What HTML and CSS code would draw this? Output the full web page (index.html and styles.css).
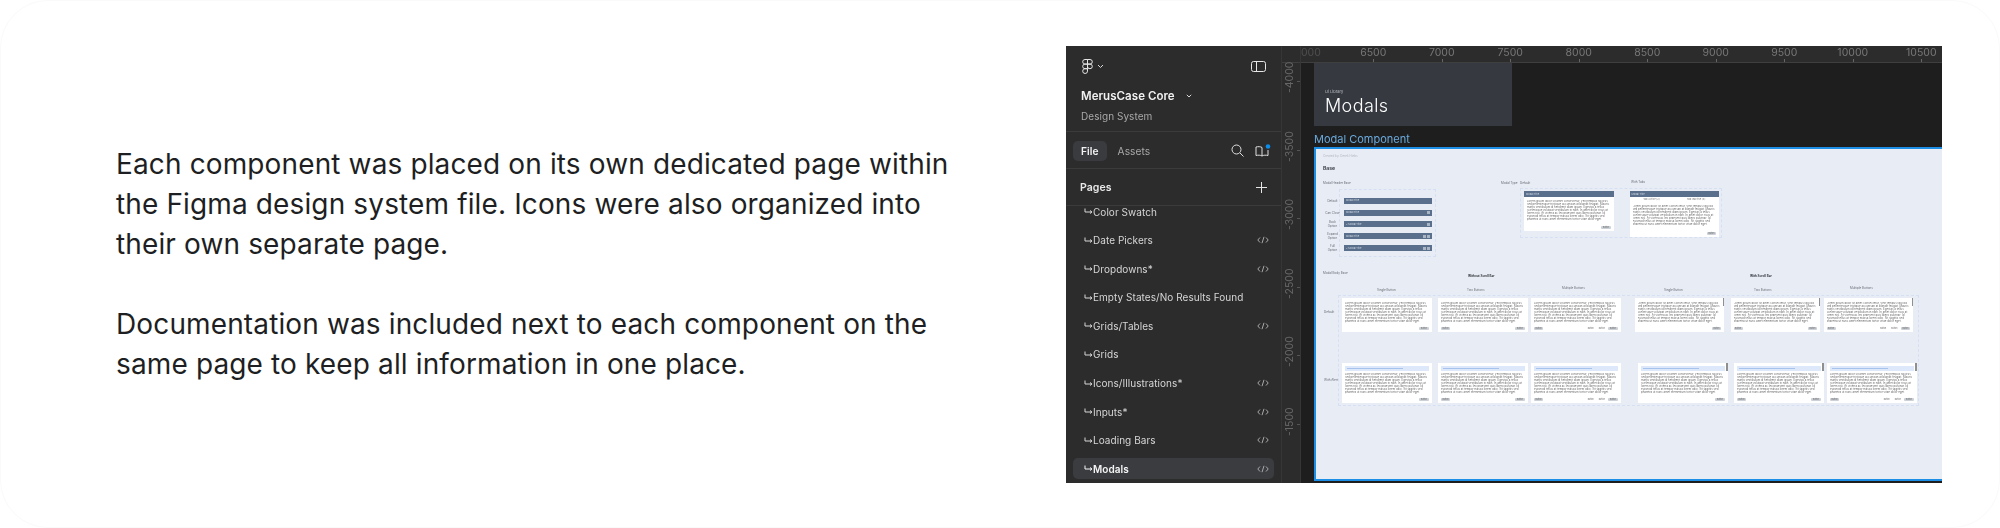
FILE: index.html
```html
<!DOCTYPE html>
<html lang="en">
<head>
    <meta charset="UTF-8">
    <meta name="viewport" content="width=device-width, initial-scale=1.0">
    <title>Design system</title>
    <link rel="stylesheet" href="styles.css">
</head>
<body>
    <svg class="defs" width="0" height="0">
      <symbol id="nest" viewBox="0 0 9 7"><path d="M1 0.5V4H7.5M6 2.5L8 4L6 5.5" fill="none" stroke="currentColor"/></symbol>
      <symbol id="code" viewBox="0 0 12 8"><path d="M3 1.5L0.8 4L3 6.5M9 1.5L11.2 4L9 6.5M7 0.8L5 7.2" fill="none" stroke="currentColor"/></symbol>
    </svg>

    <div class="slide">
      <div class="copy">
        <p>Each component was placed on its own dedicated page within the Figma design system file. Icons were also organized into their own separate page.</p>
        <p>Documentation was included next to each component on the same page to keep all information in one place.</p>
      </div>

      <div class="shot">
        <aside class="sidebar">
          <div class="side-head">
            <div class="side-top">
              <div class="logo-menu">
                <svg width="11" height="15" viewBox="0 0 11 15" fill="none" stroke="#e6e6e6"><path d="M5.5 0.5H3a2.3 2.3 0 0 0 0 4.6h2.5zM5.5 0.5H8a2.3 2.3 0 0 1 0 4.6H5.5zM5.5 5.1H3a2.3 2.3 0 0 0 0 4.6h2.5zM5.5 5.1H8a2.3 2.3 0 1 1 0 4.6a2.3 2.3 0 0 1 -2.5 -2.3zM5.5 9.7H3a2.4 2.4 0 1 0 2.5 2.4z"/></svg>
                <svg width="7" height="5" viewBox="0 0 7 5" fill="none" stroke="#d8d8d8"><path d="M1 1L3.5 3.5L6 1"/></svg>
              </div>
              <svg width="15" height="11" viewBox="0 0 15 11" fill="none" stroke="#e6e6e6"><rect x="0.5" y="0.5" width="14" height="10" rx="2"/><path d="M5.5 0.5V10.5"/></svg>
            </div>
            <div class="file-name">
              <span>MerusCase Core</span>
              <svg width="6" height="4" viewBox="0 0 6 4" fill="none" stroke="#d8d8d8"><path d="M0.8 0.8L3 3L5.2 0.8"/></svg>
            </div>
            <div class="file-team">Design System</div>
          </div>

          <div class="side-tabs">
            <span class="tab tab-active">File</span>
            <span class="tab">Assets</span>
            <div class="tab-icons">
              <svg width="13" height="13" viewBox="0 0 13 13" fill="none" stroke="#e0e0e0"><circle cx="5.5" cy="5.5" r="4.5"/><path d="M9 9L12.5 12.5"/></svg>
              <svg width="16" height="13" viewBox="0 0 16 13" fill="none" stroke="#e0e0e0"><path d="M7 3.5C5.5 2.5 3 2.5 1 3V11.5C3 11 5.5 11 7 12C8.5 11 11 11 13 11.5V6M7 3.5V12"/><circle cx="13" cy="2.5" r="2.3" fill="#0d8ce9" stroke="none"/></svg>
            </div>
          </div>

          <div class="pages-head">
            <span>Pages</span>
            <svg width="11" height="11" viewBox="0 0 11 11" stroke="#e6e6e6"><path d="M5.5 0V11M0 5.5H11"/></svg>
          </div>

          <ul class="pages">
            <li><svg class="nest"><use href="#nest"/></svg>Color Swatch</li>
            <li><svg class="nest"><use href="#nest"/></svg>Date Pickers<svg class="code"><use href="#code"/></svg></li>
            <li><svg class="nest"><use href="#nest"/></svg>Dropdowns*<svg class="code"><use href="#code"/></svg></li>
            <li><svg class="nest"><use href="#nest"/></svg>Empty States/No Results Found</li>
            <li><svg class="nest"><use href="#nest"/></svg>Grids/Tables<svg class="code"><use href="#code"/></svg></li>
            <li><svg class="nest"><use href="#nest"/></svg>Grids</li>
            <li><svg class="nest"><use href="#nest"/></svg>Icons/Illustrations*<svg class="code"><use href="#code"/></svg></li>
            <li><svg class="nest"><use href="#nest"/></svg>Inputs*<svg class="code"><use href="#code"/></svg></li>
            <li><svg class="nest"><use href="#nest"/></svg>Loading Bars<svg class="code"><use href="#code"/></svg></li>
            <li class="page-active"><svg class="nest"><use href="#nest"/></svg>Modals<svg class="code"><use href="#code"/></svg></li>
          </ul>
        </aside>

        <div class="ruler-side">
          <div class="ruler-corner"></div>
          <span>-4000</span><span>-3500</span><span>-3000</span><span>-2500</span><span>-2000</span><span>-1500</span>
        </div>

        <div class="stage">
          <div class="ruler-top">
            <span class="ruler-clip">000</span><span>6500</span><span>7000</span><span>7500</span><span>8000</span><span>8500</span><span>9000</span><span>9500</span><span>10000</span><span>10500</span>
          </div>

          <div class="canvas">
            <div class="banner">
              <small>Ui Library</small>
              <strong>Modals</strong>
            </div>
            <div class="frame-name">Modal Component</div>

            <div class="frame">
              <div class="credit">Created by: Derek Hiebs</div>
              <div class="frame-title">Base</div>
              <div class="tiny header-base">Modal Header Base</div>
              <div class="tiny type-label">Modal Type</div>
              <div class="tiny default-label">Default</div>
              <div class="tiny title-label">With Tabs</div>
              <div class="tiny body-base">Modal Body Base</div>
              <div class="tiny scroll-off">Without Scroll Bar</div>
              <div class="tiny scroll-on">With Scroll Bar</div>

              <div class="header-box">
                <div class="head-row"><span class="tiny">Default</span><div class="bar"><i>Modal Title</i></div></div>
                <div class="head-row"><span class="tiny">Can Close</span><div class="bar"><i>Modal Title</i><b></b></div></div>
                <div class="head-row"><span class="tiny">Back Option</span><div class="bar"><i>&lt; Modal Title</i><b></b></div></div>
                <div class="head-row"><span class="tiny">Expand Option</span><div class="bar"><i>Modal Title</i><b></b><b></b></div></div>
                <div class="head-row"><span class="tiny">Full Option</span><div class="bar"><i>&lt; Modal Title</i><b></b><b></b></div></div>
              </div>

              <div class="type-box">
                <div class="modal type-modal">
                  <div class="bar"><i>Modal Title</i></div>
                  <p>Lorem ipsum dolor sit amet consectetur. Velit tempus facilisis sed pellentesque tristique accumsan at blandit feugiat. Mauris mattis vestibulum id hendrerit diam ipsum. Egestas a tellus scelerisque volutpat vestibulum in nibh. In amet dolor risus at lorem nisi. At viverra ac leo praesent quis libero pulvinar. Id euismod tellus at tempor massa lorem odio. Sit sagittis sed pharetra ut nunc amet elementum tortor vitae dolor eget.</p>
                  <div class="btns"><u></u><em>Button</em></div>
                </div>
                <div class="modal type-modal tabbed">
                  <div class="bar"><i>Modal Title</i></div>
                  <div class="tabs-row"><span>Tab Active (2)</span><span>Tab Inactive (4)</span></div>
                  <p>Lorem ipsum dolor sit amet consectetur. Velit tempus facilisis sed pellentesque tristique accumsan at blandit feugiat. Mauris mattis vestibulum id hendrerit diam ipsum. Egestas a tellus scelerisque volutpat vestibulum in nibh. In amet dolor risus at lorem nisi. At viverra ac leo praesent quis libero pulvinar. Id euismod tellus at tempor massa lorem odio. Sit sagittis sed pharetra ut nunc amet elementum tortor vitae dolor eget.</p>
                  <div class="btns"><u></u><em>Button</em></div>
                </div>
              </div>

              <div class="tiny col-a">Single Button</div>
              <div class="tiny col-b">Two Buttons</div>
              <div class="tiny col-c">Multiple Buttons</div>
              <div class="tiny col-d">Single Button</div>
              <div class="tiny col-e">Two Buttons</div>
              <div class="tiny col-f">Multiple Buttons</div>
              <div class="tiny row-default">Default</div>
              <div class="tiny row-alert">With Alert</div>

              <div class="body-box">
                <div class="modal-row">
                  <div class="modal">
                    <p>Lorem ipsum dolor sit amet consectetur. Velit tempus facilisis sed pellentesque tristique accumsan at blandit feugiat. Mauris mattis vestibulum id hendrerit diam ipsum. Egestas a tellus scelerisque volutpat vestibulum in nibh. In amet dolor risus at lorem nisi. At viverra ac leo praesent quis libero pulvinar. Id euismod tellus at tempor massa lorem odio. Sit sagittis sed pharetra ut nunc amet elementum tortor vitae dolor eget.</p>
                    <div class="btns"><u></u><em>Button</em></div>
                  </div>
                  <div class="modal">
                    <p>Lorem ipsum dolor sit amet consectetur. Velit tempus facilisis sed pellentesque tristique accumsan at blandit feugiat. Mauris mattis vestibulum id hendrerit diam ipsum. Egestas a tellus scelerisque volutpat vestibulum in nibh. In amet dolor risus at lorem nisi. At viverra ac leo praesent quis libero pulvinar. Id euismod tellus at tempor massa lorem odio. Sit sagittis sed pharetra ut nunc amet elementum tortor vitae dolor eget.</p>
                    <div class="btns"><em>Button</em><u></u><em>Button</em></div>
                  </div>
                  <div class="modal tight">
                    <p>Lorem ipsum dolor sit amet consectetur. Velit tempus facilisis sed pellentesque tristique accumsan at blandit feugiat. Mauris mattis vestibulum id hendrerit diam ipsum. Egestas a tellus scelerisque volutpat vestibulum in nibh. In amet dolor risus at lorem nisi. At viverra ac leo praesent quis libero pulvinar. Id euismod tellus at tempor massa lorem odio. Sit sagittis sed pharetra ut nunc amet elementum tortor vitae dolor eget.</p>
                    <div class="btns"><em>Button</em><u></u><em class="plain">Button</em><em class="plain">Button</em><em>Button</em></div>
                  </div>
                  <div class="modal scroll group-a">
                    <p>Lorem ipsum dolor sit amet consectetur. Velit tempus facilisis sed pellentesque tristique accumsan at blandit feugiat. Mauris mattis vestibulum id hendrerit diam ipsum. Egestas a tellus scelerisque volutpat vestibulum in nibh. In amet dolor risus at lorem nisi. At viverra ac leo praesent quis libero pulvinar. Id euismod tellus at tempor massa lorem odio. Sit sagittis sed pharetra ut nunc amet elementum tortor vitae dolor eget.</p>
                    <div class="btns"><u></u><em>Button</em></div>
                  </div>
                  <div class="modal scroll">
                    <p>Lorem ipsum dolor sit amet consectetur. Velit tempus facilisis sed pellentesque tristique accumsan at blandit feugiat. Mauris mattis vestibulum id hendrerit diam ipsum. Egestas a tellus scelerisque volutpat vestibulum in nibh. In amet dolor risus at lorem nisi. At viverra ac leo praesent quis libero pulvinar. Id euismod tellus at tempor massa lorem odio. Sit sagittis sed pharetra ut nunc amet elementum tortor vitae dolor eget.</p>
                    <div class="btns"><em>Button</em><u></u><em>Button</em></div>
                  </div>
                  <div class="modal scroll tight">
                    <p>Lorem ipsum dolor sit amet consectetur. Velit tempus facilisis sed pellentesque tristique accumsan at blandit feugiat. Mauris mattis vestibulum id hendrerit diam ipsum. Egestas a tellus scelerisque volutpat vestibulum in nibh. In amet dolor risus at lorem nisi. At viverra ac leo praesent quis libero pulvinar. Id euismod tellus at tempor massa lorem odio. Sit sagittis sed pharetra ut nunc amet elementum tortor vitae dolor eget.</p>
                    <div class="btns"><em>Button</em><u></u><em class="plain">Button</em><em class="plain">Button</em><em>Button</em></div>
                  </div>
                </div>

                <div class="modal-row alerts">
                  <div class="modal">
                    <div class="alert"><s></s></div>
                    <p>Lorem ipsum dolor sit amet consectetur. Velit tempus facilisis sed pellentesque tristique accumsan at blandit feugiat. Mauris mattis vestibulum id hendrerit diam ipsum. Egestas a tellus scelerisque volutpat vestibulum in nibh. In amet dolor risus at lorem nisi. At viverra ac leo praesent quis libero pulvinar. Id euismod tellus at tempor massa lorem odio. Sit sagittis sed pharetra ut nunc amet elementum tortor vitae dolor eget.</p>
                    <div class="btns"><u></u><em>Button</em></div>
                  </div>
                  <div class="modal">
                    <div class="alert"><s></s></div>
                    <p>Lorem ipsum dolor sit amet consectetur. Velit tempus facilisis sed pellentesque tristique accumsan at blandit feugiat. Mauris mattis vestibulum id hendrerit diam ipsum. Egestas a tellus scelerisque volutpat vestibulum in nibh. In amet dolor risus at lorem nisi. At viverra ac leo praesent quis libero pulvinar. Id euismod tellus at tempor massa lorem odio. Sit sagittis sed pharetra ut nunc amet elementum tortor vitae dolor eget.</p>
                    <div class="btns"><em>Button</em><u></u><em>Button</em></div>
                  </div>
                  <div class="modal tight">
                    <div class="alert"><s></s></div>
                    <p>Lorem ipsum dolor sit amet consectetur. Velit tempus facilisis sed pellentesque tristique accumsan at blandit feugiat. Mauris mattis vestibulum id hendrerit diam ipsum. Egestas a tellus scelerisque volutpat vestibulum in nibh. In amet dolor risus at lorem nisi. At viverra ac leo praesent quis libero pulvinar. Id euismod tellus at tempor massa lorem odio. Sit sagittis sed pharetra ut nunc amet elementum tortor vitae dolor eget.</p>
                    <div class="btns"><em>Button</em><u></u><em class="plain">Button</em><em class="plain">Button</em><em>Button</em></div>
                  </div>
                  <div class="modal scroll group-b">
                    <div class="alert"><s></s></div>
                    <p>Lorem ipsum dolor sit amet consectetur. Velit tempus facilisis sed pellentesque tristique accumsan at blandit feugiat. Mauris mattis vestibulum id hendrerit diam ipsum. Egestas a tellus scelerisque volutpat vestibulum in nibh. In amet dolor risus at lorem nisi. At viverra ac leo praesent quis libero pulvinar. Id euismod tellus at tempor massa lorem odio. Sit sagittis sed pharetra ut nunc amet elementum tortor vitae dolor eget.</p>
                    <div class="btns"><u></u><em>Button</em></div>
                  </div>
                  <div class="modal scroll">
                    <div class="alert"><s></s></div>
                    <p>Lorem ipsum dolor sit amet consectetur. Velit tempus facilisis sed pellentesque tristique accumsan at blandit feugiat. Mauris mattis vestibulum id hendrerit diam ipsum. Egestas a tellus scelerisque volutpat vestibulum in nibh. In amet dolor risus at lorem nisi. At viverra ac leo praesent quis libero pulvinar. Id euismod tellus at tempor massa lorem odio. Sit sagittis sed pharetra ut nunc amet elementum tortor vitae dolor eget.</p>
                    <div class="btns"><em>Button</em><u></u><em>Button</em></div>
                  </div>
                  <div class="modal scroll tight">
                    <div class="alert"><s></s></div>
                    <p>Lorem ipsum dolor sit amet consectetur. Velit tempus facilisis sed pellentesque tristique accumsan at blandit feugiat. Mauris mattis vestibulum id hendrerit diam ipsum. Egestas a tellus scelerisque volutpat vestibulum in nibh. In amet dolor risus at lorem nisi. At viverra ac leo praesent quis libero pulvinar. Id euismod tellus at tempor massa lorem odio. Sit sagittis sed pharetra ut nunc amet elementum tortor vitae dolor eget.</p>
                    <div class="btns"><em>Button</em><u></u><em class="plain">Button</em><em class="plain">Button</em><em>Button</em></div>
                  </div>
                </div>
              </div>
            </div>
          </div>
        </div>
      </div>
    </div>
</body>
</html>
```

FILE: styles.css
```css
* {
  box-sizing: border-box;
}

html,
body {
  height: 100%;
}

body {
  margin: 0;
  background-color: #fff;
  font-family: Inter, "Liberation Sans", sans-serif;
  overflow: hidden;
}

.defs {
  display: block;
  height: 0;
}

.slide {
  display: flex;
  align-items: center;
  justify-content: space-between;
  height: 528px;
  padding: 0 57px 0 115px;
  border: 1px solid #fafafa;
  border-radius: 48px;
}

/* left copy */
.copy {
  width: 850px;
  color: #1e1f23;
  font-size: 28px;
  letter-spacing: 0.13px;
  line-height: 40px;
}

.copy p {
  margin: 0 0 40px;
}

.copy p:last-child {
  margin-bottom: 0;
}

/* figma screenshot */
.shot {
  display: flex;
  width: 876px;
  height: 437px;
  margin-top: 1px;
  background-color: #2c2c2c;
  overflow: hidden;
  filter: blur(0.35px);
}

.sidebar {
  display: flex;
  flex-direction: column;
  flex: none;
  width: 215px;
  color: #e8e8e8;
  font-size: 10px;
  letter-spacing: 0.05px;
}

.side-head {
  height: 86px;
  padding: 13px 15px 0 15px;
  border-bottom: 1px solid #3b3b3b;
}

.side-top {
  display: flex;
  align-items: center;
  justify-content: space-between;
  height: 15px;
  padding-left: 1px;
}

.logo-menu {
  display: flex;
  align-items: center;
  gap: 4px;
}

.file-name {
  display: flex;
  align-items: center;
  gap: 11px;
  margin-top: 14px;
  color: #f2f2f2;
  font-size: 11.5px;
  font-weight: 600;
  line-height: 16px;
}

.file-team {
  margin-top: 5px;
  color: #a8a8a8;
  font-size: 10px;
  line-height: 14px;
}

.side-tabs {
  display: flex;
  align-items: center;
  height: 37px;
  padding: 1px 10px 0 7px;
  border-bottom: 1px solid #3b3b3b;
}

.tab {
  padding: 3px 8px;
  color: #a8a8a8;
  font-size: 10.2px;
  line-height: 14px;
}

.tab-active {
  margin-right: 3px;
  border-radius: 5px;
  background-color: #393b3f;
  color: #f2f2f2;
  font-weight: 600;
}

.tab-icons {
  display: flex;
  align-items: center;
  gap: 11px;
  margin-left: auto;
}

.pages-head {
  display: flex;
  align-items: center;
  justify-content: space-between;
  height: 37px;
  padding: 1px 14px 0 14px;
  border-bottom: 1px solid #3b3b3b;
  font-size: 10.5px;
  font-weight: 600;
}

.pages {
  flex: 1;
  margin: 0;
  padding: 0;
  list-style: none;
  overflow: hidden;
}

.pages li {
  display: flex;
  align-items: center;
  height: 21px;
  margin: 7.6px 7px 0;
  padding: 0 5px 0 11px;
  border-radius: 5px;
  color: #d6d6d6;
  white-space: nowrap;
}

.pages li:first-child {
  margin-top: -5px;
}

.pages .page-active {
  background-color: #3a3c40;
  color: #f5f5f5;
  font-weight: 600;
}

.nest {
  flex: none;
  width: 9px;
  height: 7px;
}

.code {
  flex: none;
  width: 12px;
  height: 8px;
  margin-left: auto;
  color: #a9a9a9;
}

.ruler-side {
  display: flex;
  flex: none;
  flex-direction: column;
  align-items: center;
  gap: 46.5px;
  width: 19px;
  padding-right: 3px;
  border-left: 1px solid #363636;
  color: #666;
  font-size: 10.5px;
  line-height: 13px;
}

.ruler-corner {
  align-self: stretch;
  flex: none;
  height: 17px;
  margin: 0 -3px -38.5px 0;
  border-bottom: 1px solid #3f3f3f;
}

.ruler-side span {
  position: relative;
  flex: none;
  writing-mode: vertical-rl;
  transform: rotate(180deg);
  width: 13px;
  height: 22px;
  text-align: center;
}

/* rotated with the label, so left ends up on the right */
.ruler-side span::after {
  content: "";
  position: absolute;
  top: 50%;
  left: -4px;
  width: 3px;
  height: 1px;
  background-color: #555;
}

.stage {
  display: flex;
  flex: 1;
  flex-direction: column;
  min-width: 0;
  border-left: 1px solid #363636;
}

.ruler-top {
  display: flex;
  flex: none;
  height: 17px;
  border-bottom: 1px solid #3f3f3f;
  color: #777;
  font-size: 10.5px;
  line-height: 14px;
}

.ruler-top span {
  position: relative;
  flex: none;
  width: 68.5px;
  text-align: center;
}

.ruler-top span::after {
  content: "";
  position: absolute;
  bottom: 0;
  left: 50%;
  width: 1px;
  height: 3px;
  background-color: #666;
}

.ruler-top .ruler-clip {
  width: 38px;
  color: #4e4e4e;
  text-align: left;
}

.ruler-top .ruler-clip::after {
  display: none;
}

.canvas {
  position: relative;
  flex: 1;
  padding-left: 13px;
  background-color: #1e1e1e;
  overflow: hidden;
}

.banner {
  width: 198px;
  height: 63px;
  padding: 26px 0 0 11px;
  background-color: #363a40;
  color: #fff;
}

.banner small {
  display: block;
  color: #b9bcc1;
  font-size: 4px;
  line-height: 5px;
}

.banner strong {
  display: block;
  margin-top: 1px;
  font-size: 18px;
  font-weight: 300;
  letter-spacing: 0.4px;
  line-height: 22px;
}

.frame-name {
  margin-top: 7px;
  color: #6aa9dc;
  font-size: 11px;
  line-height: 13px;
}

.frame {
  position: relative;
  width: 629px;
  height: 334px;
  margin-top: 1px;
  border: 2px solid #1c8ee6;
  border-right: 0;
  background-color: #e8ecf5;
  color: #3a3f46;
}

/* everything below sits on the figma canvas, coordinates are frame relative */
.tiny {
  color: #666b73;
  font-size: 3px;
  line-height: 4px;
  white-space: nowrap;
}

.credit,
.frame-title,
.frame > .tiny {
  position: absolute;
}

.credit {
  top: 5px;
  left: 7px;
  color: #b4b8c0;
  font-size: 3px;
  line-height: 4px;
}

.frame-title {
  top: 16px;
  left: 7px;
  font-size: 5px;
  font-weight: 700;
  line-height: 6px;
}

.header-base { top: 32px; left: 7px; }
.type-label { top: 32px; left: 185px; }
.default-label { top: 32px; left: 204px; }
.title-label { top: 31px; left: 315px; }
.body-base { top: 122px; left: 7px; }
.scroll-off { top: 125px; left: 152px; color: #2b2e33; font-weight: 700; }
.scroll-on { top: 125px; left: 434px; color: #2b2e33; font-weight: 700; }
.col-a { top: 139px; left: 61px; }
.col-b { top: 139px; left: 151px; }
.col-c { top: 137px; left: 246px; }
.col-d { top: 139px; left: 348px; }
.col-e { top: 139px; left: 438px; }
.col-f { top: 137px; left: 534px; }
.row-default { top: 161px; left: 8px; }
.row-alert { top: 229px; left: 8px; }

.header-box {
  position: absolute;
  top: 40px;
  left: 23px;
  width: 97px;
  height: 68px;
  padding: 5px 3px 0 4px;
  border: 1px dashed #d7e0f3;
}

.head-row {
  position: relative;
  display: flex;
  align-items: center;
  height: 11.8px;
}

.head-row .tiny {
  position: absolute;
  left: -19px;
  width: 15px;
  text-align: center;
  white-space: normal;
}

.head-row .bar {
  flex: 1;
}

.bar {
  display: flex;
  align-items: center;
  gap: 1px;
  height: 6px;
  padding: 0 2px;
  background-color: #5a6f8c;
  color: #d5dbe4;
}

.bar i {
  margin-right: auto;
  font-size: 2.5px;
  font-style: normal;
  line-height: 3px;
}

.bar b {
  width: 3px;
  height: 3px;
  background-color: #aab5c4;
}

.type-box {
  position: absolute;
  top: 39px;
  left: 204px;
  display: flex;
  align-items: flex-start;
  width: 202px;
  height: 50px;
  padding: 2px 0 0 3px;
  border: 1px dashed #d7e0f3;
}

.modal.type-modal {
  height: 40px;
  margin-right: 0;
  padding-top: 0;
}

.modal.tabbed {
  height: 46px;
  margin-left: 16px;
}

.modal.type-modal p {
  margin: 3px 3px 0;
}

.tabs-row {
  display: flex;
  justify-content: space-around;
  margin-top: 1px;
  color: #777;
  font-size: 2.5px;
  line-height: 4px;
}

.body-box {
  position: absolute;
  top: 146px;
  left: 22px;
  width: 581px;
  height: 111px;
  border: 1px dashed #d7e0f3;
}

.modal-row {
  display: flex;
  align-items: flex-start;
  padding: 2px 0 0 3px;
}

.modal-row.alerts {
  padding-top: 31px;
}

.modal {
  position: relative;
  display: flex;
  flex: none;
  flex-direction: column;
  width: 89.5px;
  height: 34px;
  margin-right: 6.5px;
  padding-top: 1px;
  background-color: #fff;
}

.modal.tight {
  margin-right: 0;
}

.modal-row > .modal:nth-child(2),
.modal-row > .modal:nth-child(5) {
  margin-right: 3.5px;
}

.alerts .modal {
  height: 40px;
}

.group-a {
  margin-left: 14px;
}

.group-b {
  margin-left: 17.5px;
}

.scroll::after {
  content: "";
  position: absolute;
  top: 0;
  right: 0;
  width: 1.5px;
  height: 8px;
  background-color: #8f8f8f;
}

.modal p {
  flex: none;
  height: 21px;
  margin: 3px 3px 0;
  color: #6a6a6a;
  font-size: 2.8px;
  line-height: 3px;
  overflow: hidden;
}

.alert {
  flex: none;
  height: 5px;
  margin: 2px 3px 0;
  padding: 2px 2px 0;
  background-color: #dde8fb;
}

.alert s {
  display: block;
  width: 70%;
  height: 1px;
  background-color: #a6c3ee;
}

.alert + p {
  margin-top: 2px;
}

.btns {
  display: flex;
  align-items: center;
  gap: 2px;
  margin: auto 3px 2px;
}

.btns u {
  flex: 1;
}

.btns em {
  height: 3.5px;
  padding: 0 1.5px;
  border-radius: 1px;
  background-color: #ccd1d8;
  color: #666;
  font-size: 2px;
  font-style: normal;
  line-height: 3.5px;
}

.btns .plain {
  background-color: #fff;
}
```
